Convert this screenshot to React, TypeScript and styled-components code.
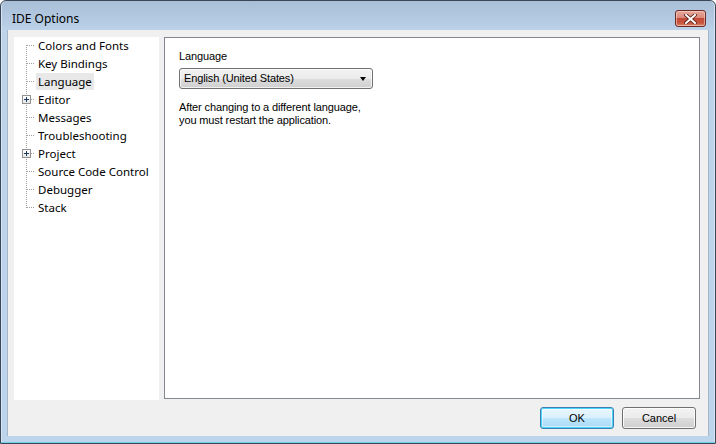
import React from "react";
import styled, { createGlobalStyle, css } from "styled-components";

const Global = createGlobalStyle`
  html, body { margin: 0; padding: 0; background: #ffffff; }
  body { width: 716px; height: 444px; overflow: hidden; }
`;

const Window = styled.div`
  box-sizing: border-box;
  width: 716px;
  height: 444px;
  border: 1px solid #3b4756;
  border-radius: 6px 6px 0 0;
  background: linear-gradient(to bottom, #a9bed7 0px, #b6cce4 22px, #bdd3ea 30px, #bcd4ec 100%);
  box-shadow: inset 0 -1px 0 #6fd3e8, inset 1px 0 0 #d6e5f4, inset -1px 0 0 #d6e5f4;
  padding: 0 7px 7px 7px;
  display: flex;
  flex-direction: column;
`;

const TitleBar = styled.div`
  height: 29px;
  display: flex;
  align-items: flex-start;
  justify-content: space-between;
`;

const Title = styled.div`
  font-family: "Noto Sans", "Open Sans", sans-serif;
  font-size: 12px;
  color: #000;
  margin: 10px 0 0 4px;
  line-height: 16px;
`;

const CloseButton = styled.div`
  box-sizing: border-box;
  width: 31px;
  height: 17px;
  margin: 9px 2px 0 0;
  border: 1px solid #6b2a26;
  border-radius: 3px;
  background: linear-gradient(to bottom, #e7a99c 0%, #d88a7a 45%, #c24a37 50%, #c8553f 80%, #d98b6f 100%);
  box-shadow: inset 0 0 0 1px rgba(255, 220, 210, 0.55);
  display: flex;
  align-items: center;
  justify-content: center;
`;

const Client = styled.div`
  flex: 1;
  background: #f0f0f0;
  box-shadow: -1px 0 0 #a5b6c9, 1px 0 0 #a5b6c9;
  display: flex;
  flex-direction: column;
`;

const Body = styled.div`
  display: flex;
  align-items: flex-start;
  gap: 5px;
  padding: 7px 8px 0 6px;
`;

const TreePanel = styled.div`
  width: 145px;
  height: 363px;
  background: #ffffff;
  box-sizing: border-box;
`;

const dots = (dir: "h" | "v") => css`
  background-image: repeating-linear-gradient(
    ${dir === "h" ? "to right" : "to bottom"},
    #a0a0a0 0px,
    #a0a0a0 1px,
    transparent 1px,
    transparent 2px
  );
`;

const TreeRow = styled.div<{ $first?: boolean; $last?: boolean }>`
  position: relative;
  height: 18px;
  display: flex;
  align-items: flex-start;
  padding-left: 22px;
  &::before {
    content: "";
    position: absolute;
    left: 12px;
    width: 1px;
    top: ${(p) => (p.$first ? "8px" : "0")};
    height: ${(p) => (p.$first ? "10px" : p.$last ? "9px" : "18px")};
    ${dots("v")}
  }
  &::after {
    content: "";
    position: absolute;
    left: 13px;
    top: 8px;
    width: 8px;
    height: 1px;
    ${dots("h")}
  }
`;

const TreeLabel = styled.span<{ $selected?: boolean }>`
  font-family: "Noto Sans", "Open Sans", sans-serif;
  font-size: 11.5px;
  line-height: 17px;
  height: 17px;
  padding: 0 2px;
  color: #000;
  white-space: nowrap;
  background: ${(p) => (p.$selected ? "#e8e8e8" : "transparent")};
`;

const Expander = styled.span`
  position: absolute;
  left: 8px;
  top: 4px;
  width: 9px;
  height: 9px;
  box-sizing: border-box;
  border: 1px solid #919191;
  background: linear-gradient(to bottom, #ffffff, #e6e6e6);
  z-index: 1;
  &::before {
    content: "";
    position: absolute;
    left: 1px;
    top: 3px;
    width: 5px;
    height: 1px;
    background: #1f3a60;
  }
  &::after {
    content: "";
    position: absolute;
    left: 3px;
    top: 1px;
    width: 1px;
    height: 5px;
    background: #1f3a60;
  }
`;

const Page = styled.div`
  box-sizing: border-box;
  width: 536px;
  height: 362px;
  background: #ffffff;
  border: 1px solid #828790;
  padding: 12px 14px;
  font-family: "Liberation Sans", Arial, sans-serif;
  font-size: 11px;
  letter-spacing: -0.12px;
  color: #000;
`;

const FieldLabel = styled.div`
  line-height: 13px;
  margin-bottom: 5px;
`;

const Combo = styled.div`
  box-sizing: border-box;
  width: 194px;
  height: 21px;
  border: 1px solid #707070;
  border-radius: 3px;
  background: linear-gradient(to bottom, #f2f2f2 0%, #ebebeb 50%, #dddddd 51%, #cfcfcf 100%);
  box-shadow: inset 0 0 0 1px rgba(255, 255, 255, 0.7);
  display: flex;
  align-items: center;
  justify-content: space-between;
  padding: 0 6px 0 4px;
`;

const ComboText = styled.span`
  font-size: 11px;
  line-height: 13px;
`;

const Arrow = styled.span`
  width: 0;
  height: 0;
  border-left: 3.5px solid transparent;
  border-right: 3.5px solid transparent;
  border-top: 4px solid #000;
`;

const Help = styled.div`
  margin-top: 12px;
  line-height: 13px;
`;

const Footer = styled.div`
  display: flex;
  justify-content: flex-end;
  gap: 8px;
  padding: 7px 12px 0 0;
`;

const Button = styled.div<{ $default?: boolean }>`
  box-sizing: border-box;
  width: 74px;
  height: 22px;
  border: 1px solid ${(p) => (p.$default ? "#3c7fb1" : "#707070")};
  border-radius: 3px;
  background: ${(p) =>
    p.$default
      ? "linear-gradient(to bottom, #eaf6fd 0%, #d9f0fc 50%, #bee6fd 51%, #a7d9f5 100%)"
      : "linear-gradient(to bottom, #f2f2f2 0%, #ebebeb 50%, #dddddd 51%, #cfcfcf 100%)"};
  box-shadow: ${(p) =>
    p.$default
      ? "inset 0 0 0 1px #48d4fb, inset 0 0 0 2px rgba(255,255,255,0.5)"
      : "inset 0 0 0 1px rgba(255,255,255,0.8)"};
  display: flex;
  align-items: center;
  justify-content: center;
  font-family: "Liberation Sans", Arial, sans-serif;
  font-size: 11px;
  color: #000;
`;

const treeItems: { label: string; expandable?: boolean; selected?: boolean }[] = [
  { label: "Colors and Fonts" },
  { label: "Key Bindings" },
  { label: "Language", selected: true },
  { label: "Editor", expandable: true },
  { label: "Messages" },
  { label: "Troubleshooting" },
  { label: "Project", expandable: true },
  { label: "Source Code Control" },
  { label: "Debugger" },
  { label: "Stack" },
];

export default function App() {
  return (
    <>
      <Global />
      <Window>
        <TitleBar>
          <Title>IDE Options</Title>
          <CloseButton>
            <svg width="13" height="10" viewBox="0 0 13 10">
              <path
                d="M2 1 L11 9 M11 1 L2 9"
                stroke="#5a1f18"
                strokeWidth="3.6"
                strokeLinecap="square"
              />
              <path
                d="M2 1 L11 9 M11 1 L2 9"
                stroke="#ffffff"
                strokeWidth="2"
                strokeLinecap="square"
              />
            </svg>
          </CloseButton>
        </TitleBar>
        <Client>
          <Body>
            <TreePanel>
              {treeItems.map((it, i) => (
                <TreeRow key={it.label} $first={i === 0} $last={i === treeItems.length - 1}>
                  {it.expandable && <Expander />}
                  <TreeLabel $selected={it.selected}>{it.label}</TreeLabel>
                </TreeRow>
              ))}
            </TreePanel>
            <Page>
              <FieldLabel>Language</FieldLabel>
              <Combo>
                <ComboText>English (United States)</ComboText>
                <Arrow />
              </Combo>
              <Help>
                After changing to a different language,
                <br />
                you must restart the application.
              </Help>
            </Page>
          </Body>
          <Footer>
            <Button $default>OK</Button>
            <Button>Cancel</Button>
          </Footer>
        </Client>
      </Window>
    </>
  );
}
